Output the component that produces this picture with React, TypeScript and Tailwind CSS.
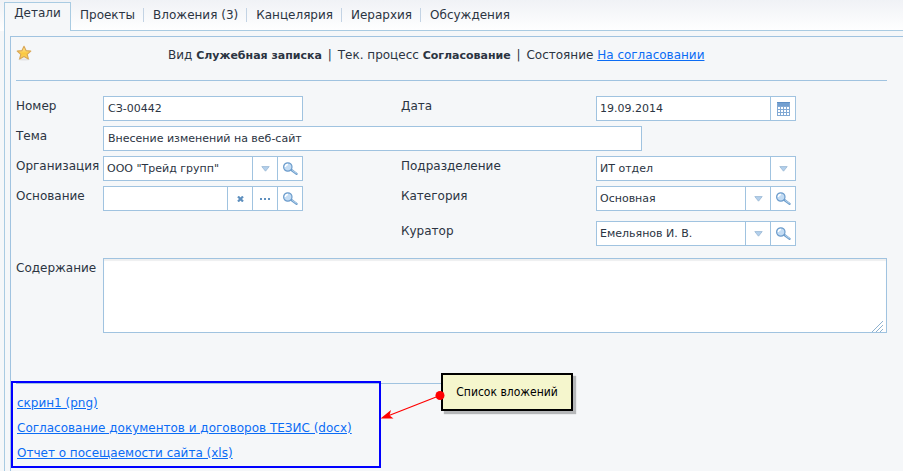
import type { ReactNode } from "react";

const tabs = ["Проекты", "Вложения (3)", "Канцелярия", "Иерархия", "Обсуждения"];
const files = ["скрин1 (png)", "Согласование документов и договоров ТЕЗИС (docx)", "Отчет о посещаемости сайта (xls)"];

function StarIcon() {
  return (
    <svg width="16" height="16" viewBox="0 0 16 16" aria-hidden="true">
      <defs>
        <linearGradient id="star" x1="0" y1="0" x2="0" y2="1">
          <stop offset="0" stopColor="#fff0b0" />
          <stop offset="0.55" stopColor="#fbc840" />
          <stop offset="1" stopColor="#fbd35c" />
        </linearGradient>
      </defs>
      <ellipse cx="8" cy="14.6" rx="6" ry="1" fill="#e3e4e6" />
      <path d="M8 1.2 10 5.6 14.8 6.1 11.2 9.3 12.4 14 8 11.6 3.6 14 4.8 9.3 1.2 6.1 6 5.6Z" fill="url(#star)" stroke="#d9a655" strokeWidth="1.1" strokeLinejoin="round" />
    </svg>
  );
}

function SearchIcon() {
  return (
    <svg width="16" height="14" viewBox="0 0 16 14" aria-hidden="true">
      <path d="M9.4 8 14.6 11.8" stroke="#6f9fcd" strokeWidth="2.2" strokeLinecap="round" />
      <path d="M10.6 8.6 14.2 11.2" stroke="#c4dbef" strokeWidth="0.9" strokeLinecap="round" />
      <circle cx="5.8" cy="5" r="4.2" fill="#c3dcf4" stroke="#6c9ccb" strokeWidth="1.2" />
      <path d="M3.4 5A2.5 2.5 0 0 1 5.9 2.5" stroke="#fff" strokeWidth="1.4" fill="none" />
    </svg>
  );
}

function CalendarIcon() {
  return (
    <svg width="13" height="14" viewBox="0 0 13 14" shapeRendering="crispEdges" aria-hidden="true">
      <rect width="13" height="14" fill="#82a9d4" />
      <rect width="13" height="1" fill="#5f8fc4" />
      <rect x="1" y="1" width="11" height="3" fill="#739fd0" />
      {[5, 8, 11].map((y) =>
        [1, 4, 7, 10].map((x) => <rect key={`${x}-${y}`} x={x} y={y} width="2" height="2" fill="#fff" />)
      )}
    </svg>
  );
}

function ArrowIcon() {
  return (
    <svg width="9" height="6" viewBox="0 0 9 6" aria-hidden="true">
      <path d="M0.8 0.6H8.2L4.5 5.2Z" fill="#b4d0ec" stroke="#98b6d3" strokeWidth="0.8" />
    </svg>
  );
}

function IconButton({ label, children }: { label: string; children: ReactNode }) {
  return (
    <button type="button" aria-label={label} className="flex h-full w-[25px] shrink-0 items-center justify-center border-l border-[#a0c3e0] bg-white">
      {children}
    </button>
  );
}

function Label({ htmlFor, children }: { htmlFor: string; children: ReactNode }) {
  return (
    <label htmlFor={htmlFor} className="leading-5 whitespace-nowrap">
      {children}
    </label>
  );
}

const box = "flex h-[25px] border border-[#a0c3e0] bg-white text-[11px]";

function Combo({ id, value, search }: { id: string; value: string; search?: boolean }) {
  return (
    <div className={box}>
      <div className="relative min-w-0 flex-1">
        <select id={id} className="h-full w-full appearance-none bg-white pt-[2px] pr-[26px] pl-[3px] outline-none">
          <option>{value}</option>
        </select>
        <span className="pointer-events-none absolute inset-y-0 right-0 flex w-[25px] items-center justify-center border-l border-[#a0c3e0]">
          <ArrowIcon />
        </span>
      </div>
      {search && (
        <IconButton label="Найти">
          <SearchIcon />
        </IconButton>
      )}
    </div>
  );
}

export default function App() {
  return (
    <div className="flex min-h-screen flex-col overflow-hidden bg-[#f5f7f9] font-['Verdana','DejaVu_Sans',sans-serif] text-[12px] text-[#2b3442]">
      <nav className="flex h-[31px] items-end bg-linear-to-b from-[#f0f2f6] to-white">
        <span className="w-1 self-stretch" />
        <button type="button" className="h-[29px] w-[67px] shrink-0 border border-b-0 border-[#a9cbe2] bg-[#f5f7f9] pb-2">
          Детали
        </button>
        <div className="flex h-full flex-1 items-center border-b border-[#a9cbe2]">
          {tabs.map((t, i) => (
            <button
              key={t}
              type="button"
              className={`h-[14px] pr-2 pl-[9px] leading-[14px] whitespace-nowrap ${i < tabs.length - 1 ? "border-r border-[#c3d3e4]" : ""}`}
            >
              {t}
            </button>
          ))}
        </div>
      </nav>

      <main className="ml-1 flex flex-1 flex-col border-l border-[#a9cbe2] pt-[5px] pl-[5px]">
        <section className="flex-1 border-t border-l border-[#a0c3e0] pr-4 pl-[5px]">
          <header className="flex h-11 border-b border-[#a0c3e0] pt-2">
            <button type="button" aria-label="В избранное" className="h-4 w-4">
              <StarIcon />
            </button>
            <p className="ml-[136px] pt-px leading-[18px] whitespace-nowrap">
              Вид <b className="text-[11px]">Служебная записка</b> <span className="mx-[2px]">|</span> Тек. процесс{" "}
              <b className="text-[11px]">Согласование</b> <span className="mx-[2px]">|</span> Состояние{" "}
              <a href="#state" className="text-[#0b6cf5] underline">На согласовании</a>
            </p>
          </header>

          <form className="mt-[15px]">
            <div className="grid grid-cols-[87px_200px_98px_195px_200px] gap-y-[5px]">
              <Label htmlFor="number">Номер</Label>
              <div className={box}>
                <input id="number" defaultValue="СЗ-00442" className="w-full px-1 pt-[2px] outline-none" />
              </div>
              <span />
              <Label htmlFor="date">Дата</Label>
              <div className={box}>
                <input id="date" defaultValue="19.09.2014" className="min-w-0 flex-1 px-[3px] pt-[2px] outline-none" />
                <IconButton label="Календарь">
                  <CalendarIcon />
                </IconButton>
              </div>

              <Label htmlFor="subject">Тема</Label>
              <div className="col-span-4 pr-[154px]">
                <div className={box}>
                  <input id="subject" defaultValue="Внесение изменений на веб-сайт" className="w-full px-1 pt-[2px] outline-none" />
                </div>
              </div>

              <Label htmlFor="org">Организация</Label>
              <Combo id="org" value={'ООО "Трейд групп"'} search />
              <span />
              <Label htmlFor="dept">Подразделение</Label>
              <Combo id="dept" value="ИТ отдел" />

              <Label htmlFor="basis">Основание</Label>
              <div className={box}>
                <input id="basis" className="min-w-0 flex-1 px-1 outline-none" />
                <IconButton label="Очистить">
                  <svg width="7" height="6" viewBox="0 0 7 6" aria-hidden="true">
                    <path d="M1 0.5 6 5.5M6 0.5 1 5.5" stroke="#5f90bf" strokeWidth="2.2" />
                  </svg>
                </IconButton>
                <IconButton label="Выбрать">
                  <svg width="10" height="2" viewBox="0 0 10 2" aria-hidden="true">
                    <path d="M0 0h2v2H0zM4 0h2v2H4zM8 0h2v2H8z" fill="#5f90bf" />
                  </svg>
                </IconButton>
                <IconButton label="Найти">
                  <SearchIcon />
                </IconButton>
              </div>
              <span />
              <Label htmlFor="category">Категория</Label>
              <Combo id="category" value="Основная" search />
            </div>

            <div className="mt-2.5 grid grid-cols-[195px_200px] pl-[385px]">
              <Label htmlFor="curator">Куратор</Label>
              <Combo id="curator" value="Емельянов И. В." search />
            </div>

            <div className="mt-3 flex">
              <div className="flex w-[87px] shrink-0 items-start">
                <Label htmlFor="content">Содержание</Label>
              </div>
              <div className="relative h-[75px] flex-1">
                <textarea id="content" className="block h-full w-full resize-none border border-[#a0c3e0] bg-white p-1 shadow-[inset_0_2px_1px_#eeeff0] outline-none" />
                <svg className="pointer-events-none absolute right-1 bottom-px" width="11" height="11" viewBox="0 0 11 11" aria-hidden="true">
                  <path d="M0 11 11 0M4 11 11 4M8 11 11 8" stroke="#8fb2cf" strokeWidth="1" />
                </svg>
              </div>
            </div>
          </form>

          <div className="relative mt-[50px] w-[430px] border-t border-[#a0c3e0] pt-[7px]">
            <ul className="pl-px">
              {files.map((f) => (
                <li key={f} className="h-[25px] leading-[25px] whitespace-nowrap">
                  <a href="#file" className="text-[#0b6cf5] underline">{f}</a>
                </li>
              ))}
            </ul>
            <div className="pointer-events-none absolute -top-[3px] -left-[5px] h-[87px] w-[370px] border-2 border-[#0000ff]" />
            <div className="absolute -top-[11px] left-[425px] flex h-[38px] w-[132px] items-center justify-center border-2 border-black bg-[#f5f6cd] font-['Tahoma','DejaVu_Sans_Condensed',sans-serif] whitespace-nowrap text-black shadow-[3px_3px_1px_#b5b7b9]">
              Список вложений
            </div>
            <svg className="pointer-events-none absolute top-0 left-[364px]" width="70" height="40" viewBox="0 0 70 40" aria-hidden="true">
              <path d="M60 11.5 9 31.5" stroke="#f00" strokeWidth="1.2" />
              <path d="M0.5 34.5 11 26 9.5 31.5 13.5 34.5Z" fill="#f00" />
              <circle cx="60" cy="11.5" r="4.5" fill="#f00" />
            </svg>
          </div>
        </section>
      </main>
    </div>
  );
}
